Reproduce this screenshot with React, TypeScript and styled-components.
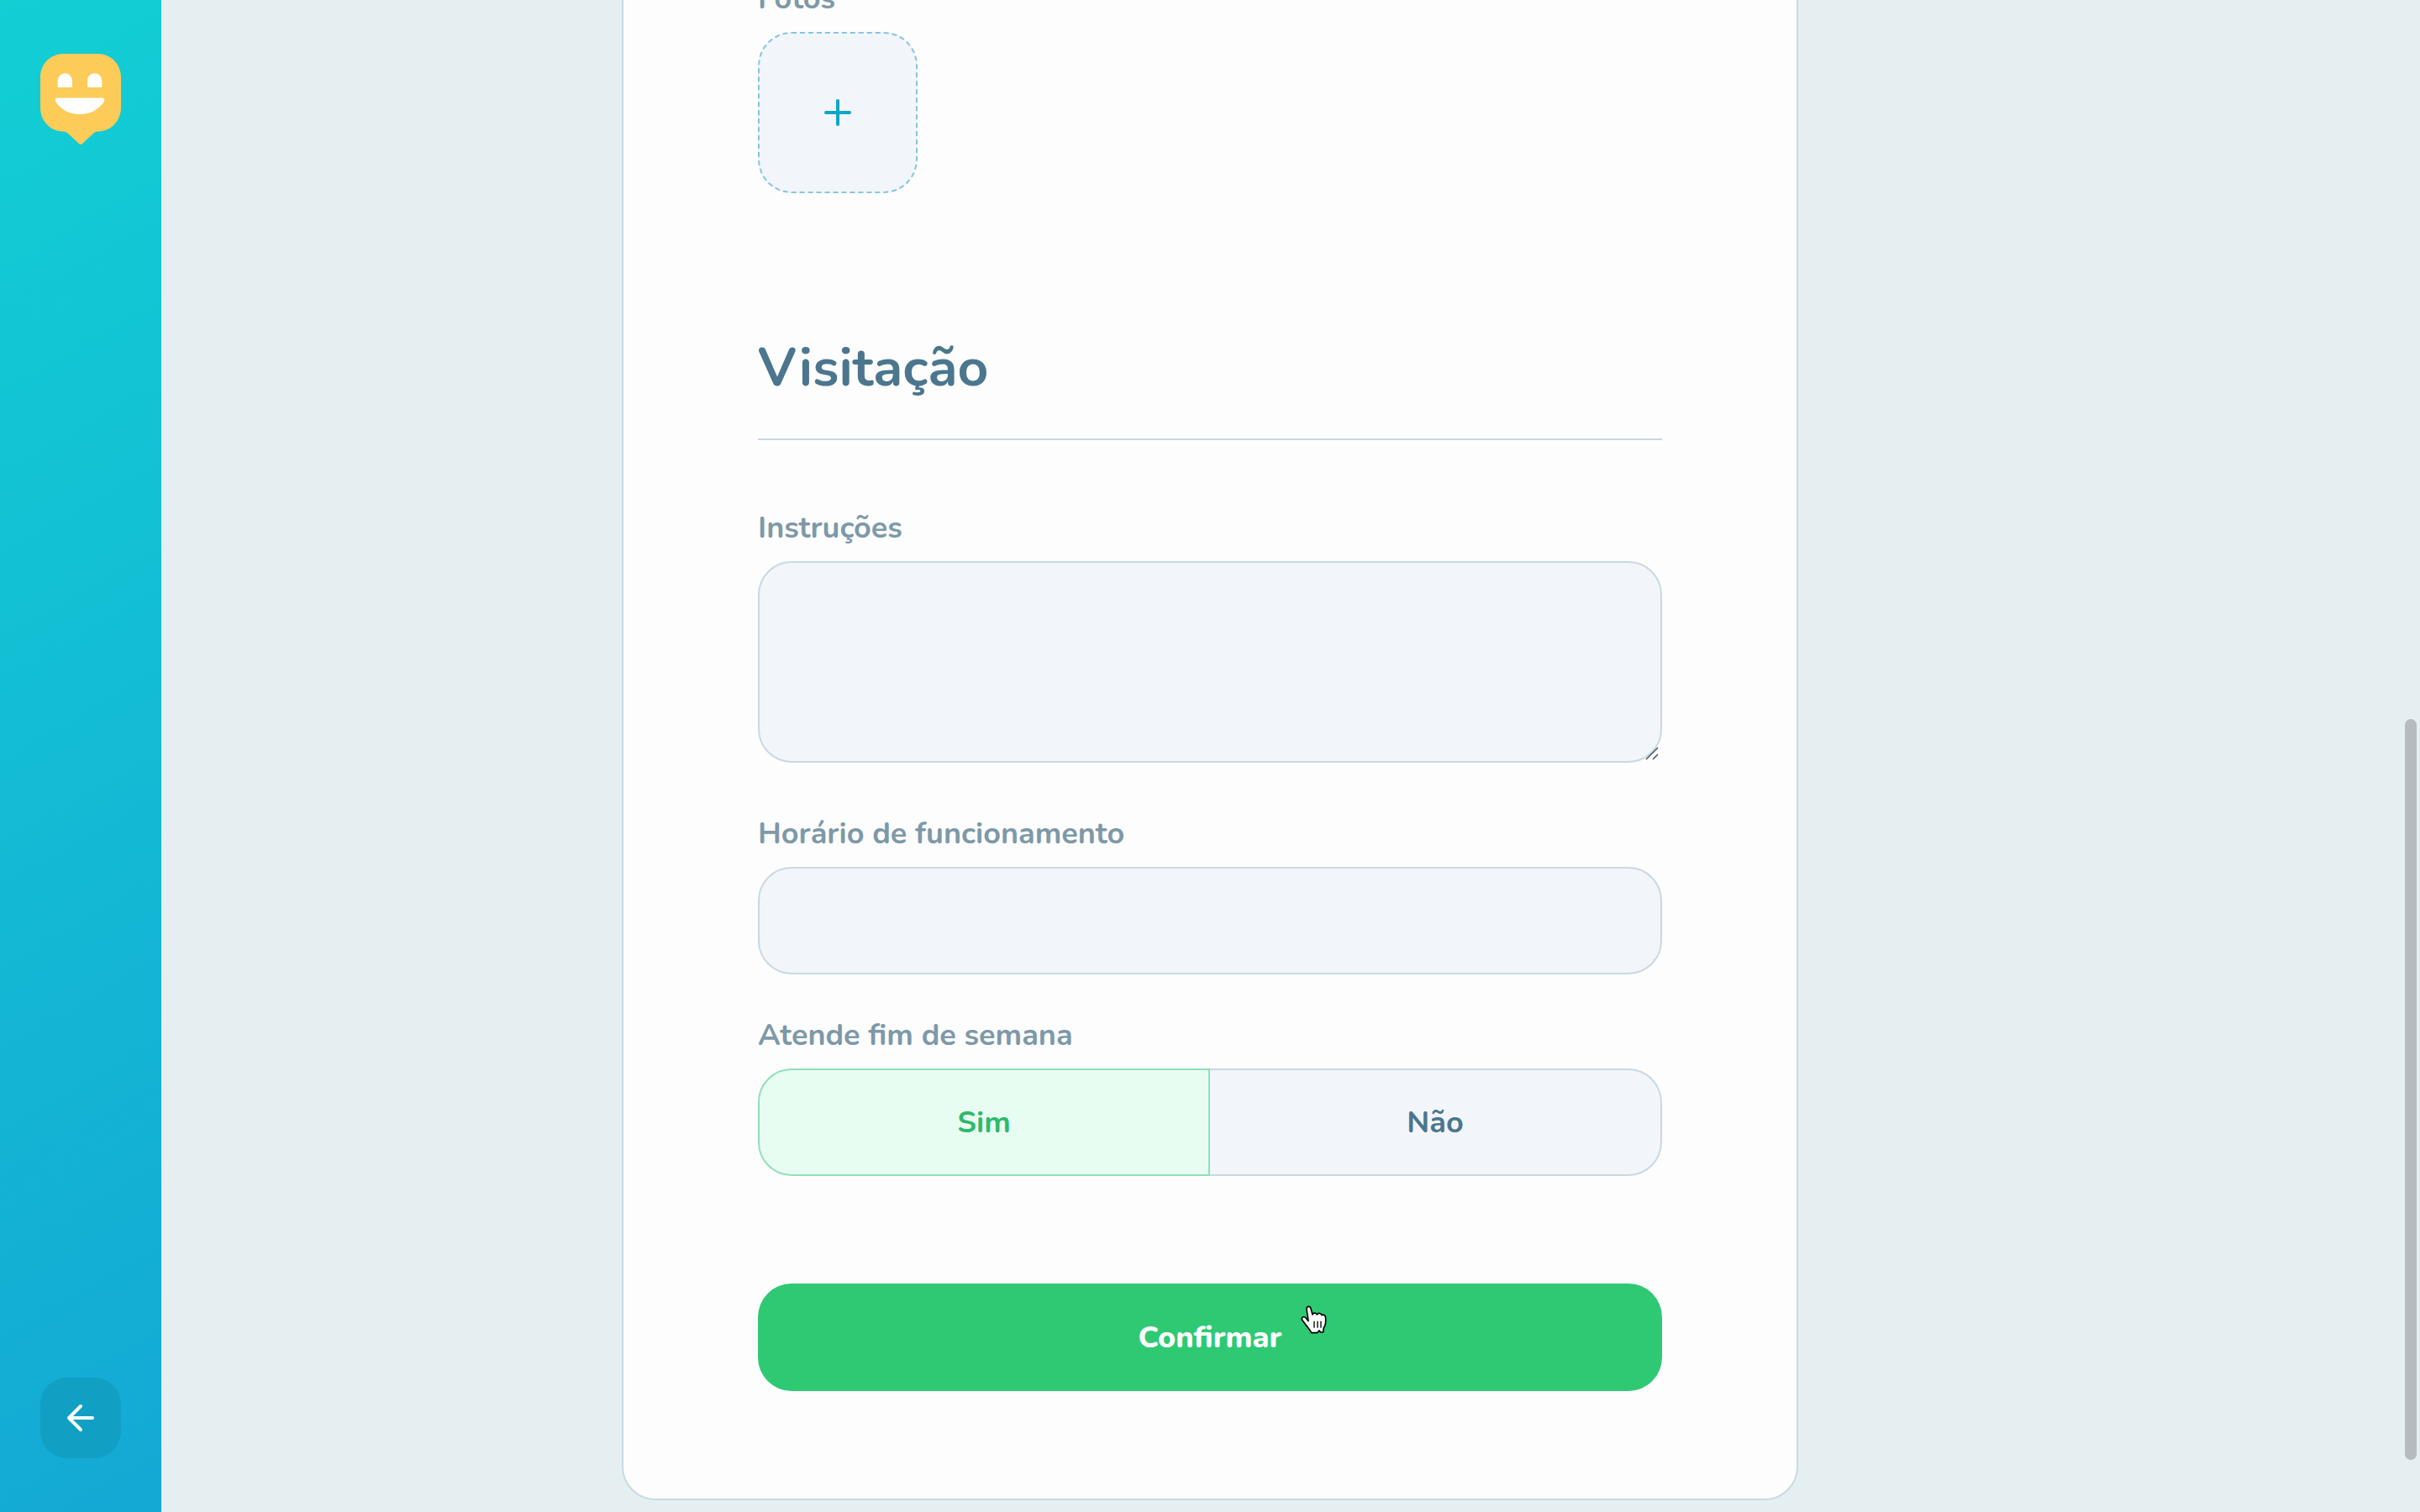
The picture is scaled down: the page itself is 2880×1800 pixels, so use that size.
import React, { useState } from 'react';
import styled, { createGlobalStyle } from 'styled-components';

const color = {
  page: '#e5eff2',
  card: '#fdfdfd',
  line: '#c8d9e2',
  field: '#f2f5fa',
  title: '#4b768e',
  label: '#7d99a8',
  accent: '#0fa6c9',
  dashed: '#84c6e2',
  green: '#2fc974',
  greenText: '#2dba6c',
  greenLine: '#8fdfba',
  greenSoft: '#e8fdf1',
};

const GlobalStyle = createGlobalStyle`
  * {
    box-sizing: border-box;
    margin: 0;
    padding: 0;
  }

  body {
    background: ${color.page};
    overflow: hidden;
  }

  body, input, textarea, button {
    font-family: Nunito, Lato, sans-serif;
    font-size: 36px;
    font-weight: 700;
  }

  button {
    cursor: pointer;
    border: 0;
  }
`;

const Page = styled.div`
  display: grid;
  grid-template-columns: 192px 1fr 192px;
  height: 100vh;
`;

const Sidebar = styled.aside`
  display: flex;
  flex-direction: column;
  justify-content: space-between;
  align-items: center;
  padding: 64px 0;
  background: linear-gradient(330deg, #14a8d4 0%, #12cfd4 100%);
`;

const BackButton = styled.button`
  display: grid;
  place-items: center;
  width: 96px;
  height: 96px;
  border-radius: 32px;
  background: #129fc4;
  color: #fff;
`;

const Main = styled.main`
  display: flex;
  flex-direction: column;
  justify-content: flex-end;
  align-items: center;
  min-height: 0;
  padding-bottom: 14px;
`;

const Card = styled.form`
  flex-shrink: 0;
  width: 100%;
  max-width: 1400px;
  padding: 128px 160px;
  border: 2px solid ${color.line};
  border-radius: 40px;
  background: ${color.card};
`;

const Section = styled.section`
  display: flex;
  flex-direction: column;
  gap: 48px;
`;

const SectionTitle = styled.h2`
  margin: 174px 0 32px;
  padding-bottom: 50px;
  border-bottom: 2px solid ${color.line};
  color: ${color.title};
  font-size: 64px;
  font-weight: 700;
  line-height: 68px;
`;

const Field = styled.div<{ $extraSpace?: boolean }>`
  display: flex;
  flex-direction: column;
  gap: 14px;
  padding-bottom: ${(p) => (p.$extraSpace ? '12px' : '0')};
`;

const Label = styled.label`
  color: ${color.label};
  line-height: 50px;
`;

const PhotoGrid = styled.div`
  display: grid;
  grid-template-columns: repeat(5, 1fr);
  gap: 32px;
`;

const AddPhoto = styled.button`
  display: grid;
  place-items: center;
  height: 192px;
  border: 2px dashed ${color.dashed};
  border-radius: 40px;
  background: ${color.field};
  color: ${color.accent};
`;

const TextInput = styled.input`
  width: 100%;
  height: 128px;
  padding: 0 32px;
  border: 2px solid ${color.line};
  border-radius: 40px;
  background: ${color.field};
  color: ${color.title};
  outline: 0;
`;

const TextAreaFrame = styled.div`
  position: relative;
  display: flex;
`;

const TextArea = styled.textarea`
  width: 100%;
  height: 240px;
  padding: 32px;
  border: 2px solid ${color.line};
  border-radius: 40px;
  background: ${color.field};
  color: ${color.title};
  resize: none;
  outline: 0;
`;

const ResizeGrip = styled.svg`
  position: absolute;
  right: 4px;
  bottom: 3px;
  pointer-events: none;
`;

const Choices = styled.div`
  display: grid;
  grid-template-columns: 1fr 1fr;
`;

const Choice = styled.button<{ $active: boolean; $side: 'left' | 'right' }>`
  height: 128px;
  border: 2px solid ${(p) => (p.$active ? color.greenLine : color.line)};
  border-radius: ${(p) => (p.$side === 'left' ? '40px 0 0 40px' : '0 40px 40px 0')};
  ${(p) => !p.$active && (p.$side === 'left' ? 'border-right: 0;' : 'border-left: 0;')}
  background: ${(p) => (p.$active ? color.greenSoft : color.field)};
  color: ${(p) => (p.$active ? color.greenText : color.title)};
`;

const SubmitArea = styled.div`
  position: relative;
  margin-top: 128px;
`;

const Submit = styled.button`
  display: block;
  width: 100%;
  height: 128px;
  border-radius: 40px;
  background: ${color.green};
  color: #fff;
  font-weight: 800;
`;

const Pointer = styled.svg`
  position: absolute;
  top: 26px;
  left: 60%;
  pointer-events: none;
`;

const ScrollThumb = styled.div`
  position: fixed;
  top: 856px;
  right: 4px;
  bottom: 62px;
  width: 14px;
  border-radius: 7px;
  background: #b5bbc0;
`;

const Logo = () => (
  <svg width="96" height="108" viewBox="0 0 96 108" role="img" aria-label="Happy">
    <path
      fill="#fccb58"
      d="M28 0H68C84 0 96 12 96 28V64C96 80 84 92 70 92.500C67 92.500 65 93 63 95L50 107Q48 109 46 107L33 95C31 93 29 92.500 26 92.500C12 92 0 80 0 64V28C0 12 12 0 28 0Z"
    />
    <path
      fill="#fff"
      d="M20.700 40V32.500C20.700 27 24.500 23.200 29.400 23.200S38 27 38 32.500V40ZM56 40V32.500C56 27 59.800 23.200 64.700 23.200S73.300 27 73.300 32.500V40Z"
    />
    <path
      fill="#fff"
      d="M20 52.500H74C76 52.500 77 55 75.500 57.500C70 66 60 72 47 72S24 66 18.500 57.500C17 55 18 52.500 20 52.500Z"
    />
  </svg>
);

const StrokeIcon = ({ d }: { d: string }) => (
  <svg
    width="48"
    height="48"
    viewBox="0 0 24 24"
    fill="none"
    stroke="currentColor"
    strokeWidth="2"
    strokeLinecap="round"
    strokeLinejoin="round"
    aria-hidden="true"
  >
    <path d={d} />
  </svg>
);

export default function App() {
  const [weekends, setWeekends] = useState(true);

  return (
    <>
      <GlobalStyle />
      <Page>
        <Sidebar>
          <Logo />
          <BackButton type="button" aria-label="Voltar">
            <StrokeIcon d="M19 12H5M12 19L5 12L12 5" />
          </BackButton>
        </Sidebar>

        <Main>
          <Card onSubmit={(e) => e.preventDefault()}>
            <Field>
              <Label htmlFor="photos">Fotos</Label>
              <PhotoGrid>
                <AddPhoto id="photos" type="button">
                  <StrokeIcon d="M12 5V19M5 12H19" />
                </AddPhoto>
              </PhotoGrid>
            </Field>

            <Section>
              <SectionTitle>Visitação</SectionTitle>

              <Field $extraSpace>
                <Label htmlFor="instructions">Instruções</Label>
                <TextAreaFrame>
                  <TextArea id="instructions" />
                  <ResizeGrip width="16" height="16" viewBox="0 0 16 16" aria-hidden="true">
                    <path d="M1 15L15 1M9 15L15 9" stroke="#505050" strokeWidth="1.500" />
                  </ResizeGrip>
                </TextAreaFrame>
              </Field>

              <Field>
                <Label htmlFor="opening-hours">Horário de funcionamento</Label>
                <TextInput id="opening-hours" />
              </Field>

              <Field>
                <Label as="span" id="weekends">
                  Atende fim de semana
                </Label>
                <Choices role="group" aria-labelledby="weekends">
                  <Choice
                    type="button"
                    $side="left"
                    $active={weekends}
                    aria-pressed={weekends}
                    onClick={() => setWeekends(true)}
                  >
                    Sim
                  </Choice>
                  <Choice
                    type="button"
                    $side="right"
                    $active={!weekends}
                    aria-pressed={!weekends}
                    onClick={() => setWeekends(false)}
                  >
                    Não
                  </Choice>
                </Choices>
              </Field>
            </Section>

            <SubmitArea>
              <Submit type="submit">Confirmar</Submit>
              <Pointer width="32" height="36" viewBox="0 0 96 108" aria-hidden="true">
                <path
                  d="M21 12C20 2 34 1 36 11L42 33C45 25 55 26 58 33C62 26 72 27 75 35C80 31 90 36 89 46C90 60 88 72 82 80L80 96H71L66 90L59 98H38C34 88 24 78 17 68C13 62 9 58 5 52C0 42 13 38 18 45L27 56C26 42 22 26 21 12Z"
                  fill="#fff"
                  stroke="#000"
                  strokeWidth="5"
                  strokeLinejoin="round"
                />
                <path d="M48 56V80M60 56V80M72 56V80" stroke="#000" strokeWidth="4" />
              </Pointer>
            </SubmitArea>
          </Card>
        </Main>
      </Page>
      <ScrollThumb />
    </>
  );
}
